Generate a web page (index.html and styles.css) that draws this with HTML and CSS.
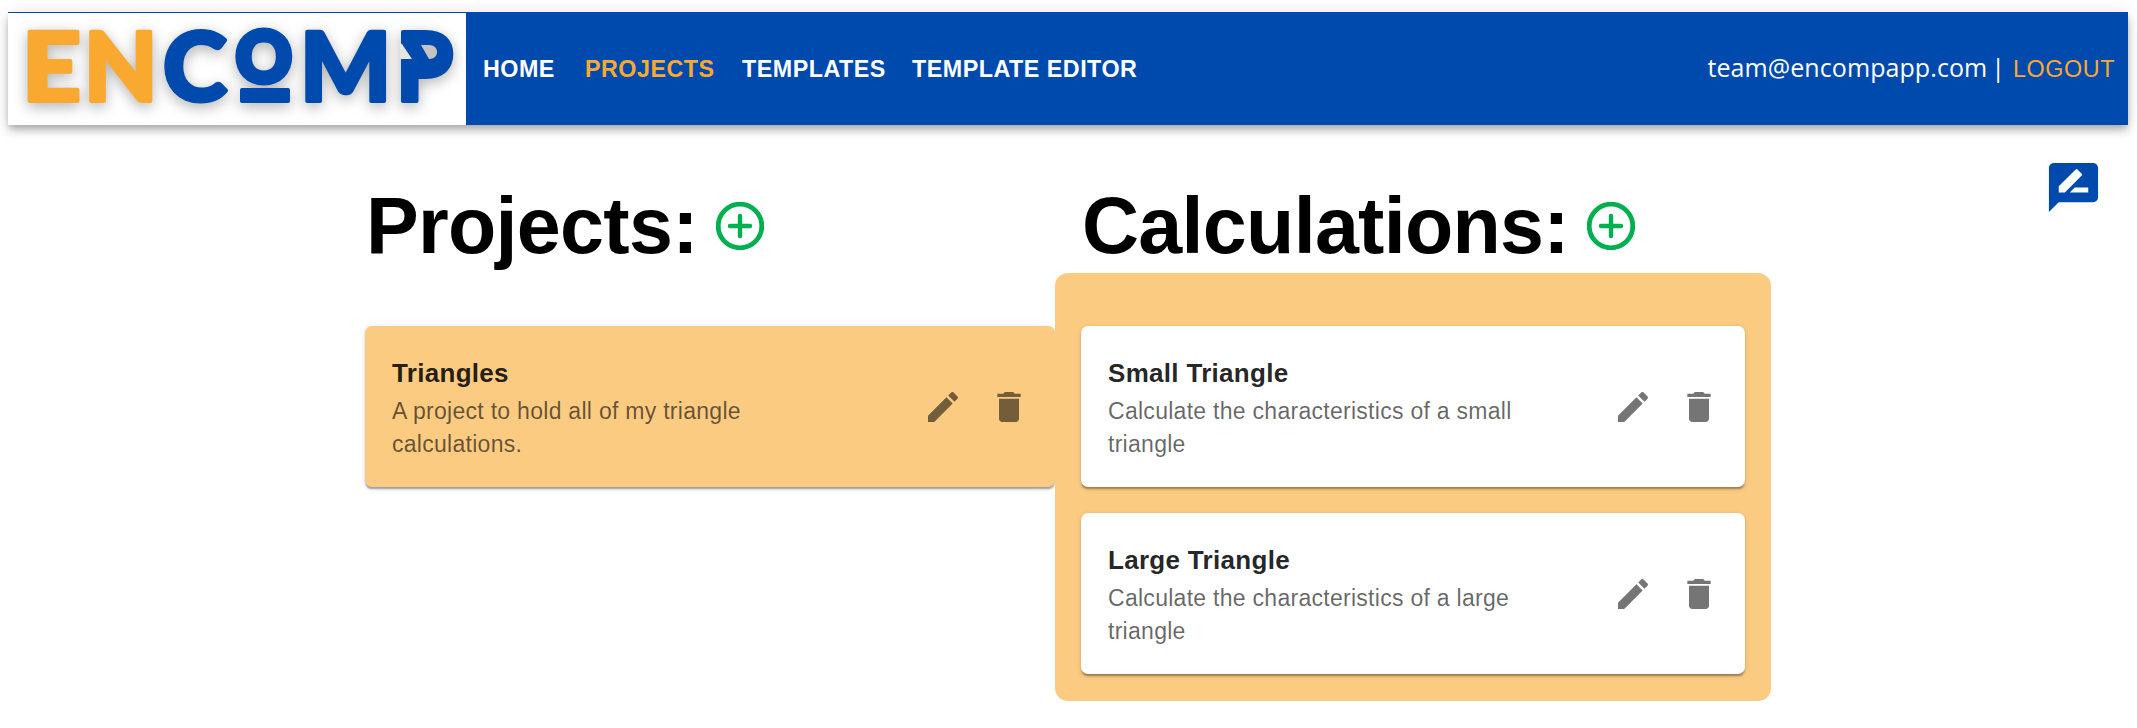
FILE: index.html
```html
<!DOCTYPE html>
<html lang="en">
<head>
<meta charset="utf-8">
<title>Encomp</title>
<link rel="stylesheet" href="styles.css">
</head>
<body>
<svg class="sprite" aria-hidden="true">
  <symbol id="edit" viewBox="0 0 24 24"><path d="M3 17.25V21h3.75L17.81 9.94l-3.75-3.75L3 17.25zM20.71 7.04c.39-.39.39-1.02 0-1.41l-2.34-2.34c-.39-.39-1.02-.39-1.41 0l-1.83 1.83 3.75 3.75 1.83-1.83z"/></symbol>
  <symbol id="trash" viewBox="0 0 24 24"><path d="M6 19c0 1.100.9 2 2 2h8c1.100 0 2-.9 2-2V7H6v12zM19 4h-3.500l-1-1h-5l-1 1H5v2h14V4z"/></symbol>
  <symbol id="add" viewBox="0 0 24 24"><circle cx="12" cy="12" r="10.900" fill="none" stroke="currentColor" stroke-width="2.400"/><path d="M12 7v10M7 12h10" fill="none" stroke="currentColor" stroke-width="2.200" stroke-linecap="round"/></symbol>
</svg>
<header class="navbar">
  <a class="brand">
    <svg class="logo" viewBox="8 13 458 112">
      <g class="logo-shade">
        <g class="logo-gold">
          <text transform="translate(22 101) scale(1.080 1)">E</text>
          <text transform="translate(84 101)">N</text>
        </g>
        <g class="logo-blue">
          <text transform="translate(163 101) scale(1.020 1)">C</text>
          <text class="logo-o" transform="translate(236 82) scale(.980 1)">O</text>
          <rect x="240" y="88" width="50" height="15" rx="2"/>
          <text transform="translate(300 101) scale(1.010 1)">M</text>
          <text transform="translate(396 101) scale(.960 1)">P</text>
        </g>
      </g>
      <path class="logo-cover" d="M410 36h26v30h-26z"/>
      <path class="logo-notch" d="M400 43l2 1 10 15h-12z"/>
      <path class="logo-gap" d="M421 45h8c5 0 8 3 8 7s-3 7-8 7z"/>
    </svg>
  </a>
  <nav class="links">
    <a class="link home">HOME</a>
    <a class="link projects active">PROJECTS</a>
    <a class="link templates">TEMPLATES</a>
    <a class="link editor">TEMPLATE EDITOR</a>
  </nav>
  <div class="account"><span class="email">team@encompapp.com</span><span class="bar">|</span><a class="logout">LOGOUT</a></div>
</header>
<main class="board">
  <section class="column">
    <h1 class="heading"><span>Projects:</span><svg class="add"><use href="#add"/></svg></h1>
    <div class="list">
      <article class="card selected">
        <div class="copy"><h2 class="title">Triangles</h2><p class="text">A project to hold all of my triangle<br>calculations.</p></div>
        <div class="tools"><svg class="icon"><use href="#edit"/></svg><svg class="icon"><use href="#trash"/></svg></div>
      </article>
    </div>
  </section>
  <section class="column calculations">
    <h1 class="heading"><span>Calculations:</span><svg class="add"><use href="#add"/></svg></h1>
    <div class="list panel">
      <article class="card">
        <div class="copy"><h2 class="title">Small Triangle</h2><p class="text">Calculate the characteristics of a small<br>triangle</p></div>
        <div class="tools"><svg class="icon"><use href="#edit"/></svg><svg class="icon"><use href="#trash"/></svg></div>
      </article>
      <article class="card">
        <div class="copy"><h2 class="title">Large Triangle</h2><p class="text">Calculate the characteristics of a large<br>triangle</p></div>
        <div class="tools"><svg class="icon"><use href="#edit"/></svg><svg class="icon"><use href="#trash"/></svg></div>
      </article>
    </div>
  </section>
  <svg class="review" viewBox="0 0 24 24"><path d="M20 2H4c-1.100 0-1.990.9-1.990 2L2 22l4-4h14c1.100 0 2-.9 2-2V4c0-1.100-.9-2-2-2zM6 14v-2.470l6.880-6.880c.2-.2.51-.2.71 0l1.770 1.770c.2.2.2.51 0 .71L8.470 14H6zm12 0h-7.500l2-2H18v2z"/></svg>
</main>
</body>
</html>
```
FILE: styles.css
```css
* { box-sizing: border-box; }
body { margin: 0; padding: 12px 9px 0 8px; min-height: 728px; background: #fff; font-family: "Liberation Sans", Arial, sans-serif; }
h1, h2, p { margin: 0; }
.sprite { display: none; }

.navbar { display: flex; align-items: center; height: 113px; padding-right: 13px; background: #004aad; box-shadow: 0 3.300px 6.600px -1.700px rgba(0,0,0,.2), 0 6.600px 8.300px rgba(0,0,0,.14), 0 1.700px 16.600px rgba(0,0,0,.12); }
.brand { width: 458px; height: 112px; margin-top: 1px; background: #fff; }
.logo { display: block; width: 458px; height: 112px; overflow: visible; }
.logo text { font: 900 95px Lato, "Liberation Sans", sans-serif; stroke-width: 4px; stroke-linejoin: round; }
.logo .logo-o { font-size: 70px; stroke-width: 6px; }
.logo-gold { fill: #faa930; stroke: #faa930; }
.logo-blue { fill: #004aad; stroke: #004aad; }
.logo-blue rect { stroke: none; }
.logo-shade { filter: drop-shadow(0 4px 7px rgba(0,0,0,.3)); }
.logo-cover { fill: #004aad; }
.logo-notch { fill: #e6e6e6; }
.logo-gap { fill: #c4c4c4; }

.links { display: flex; margin-left: 17px; font-size: 23.300px; font-weight: 700; line-height: 28px; color: #fff; white-space: nowrap; }
.link { letter-spacing: .5px; }
.home { width: 102px; }
.projects { width: 157px; }
.templates { width: 170px; }
.active, .logout { color: #faa930; }
.logout { letter-spacing: .6px; }
.account { display: flex; align-items: center; margin-left: auto; color: #fff; font-size: 23.300px; line-height: 28px; white-space: nowrap; }
.email, .bar { padding-bottom: 3px; font-family: "Open Sans", "Noto Sans", sans-serif; font-size: 25px; }
.email { letter-spacing: .08px; }
.bar { margin: 0 8px 0 4px; }

.board { position: relative; display: flex; padding-left: 357px; }
.column { width: 690px; padding-top: 48px; }
.calculations { width: 716px; }
.heading { display: flex; align-items: center; height: 100px; font-size: 79px; line-height: 100px; letter-spacing: -.7px; white-space: nowrap; }
.heading span { padding: 5px 0 0 1px; }
.calculations .heading { padding-left: 26px; }
.add { width: 48px; height: 48px; margin: 6px 0 0 18px; color: #00b050; overflow: visible; }
.list { display: flex; flex-direction: column; gap: 26px; padding-top: 53px; }
.panel { padding: 53px 26px 27px; background: #fccb82; border-radius: 13px; }
.card { display: flex; align-items: center; justify-content: space-between; height: 161px; padding: 0 27px; border-radius: 7px; background: #fff; box-shadow: 0 3.300px 1.700px -1.700px rgba(0,0,0,.2), 0 1.700px 1.700px rgba(0,0,0,.14), 0 1.700px 5px rgba(0,0,0,.12); }
.selected { background: #fccb82; }
.title { font-size: 26px; line-height: 41px; letter-spacing: .3px; color: rgba(0,0,0,.87); white-space: nowrap; }
.text { padding-top: 1px; font-size: 23px; line-height: 33px; letter-spacing: .28px; color: rgba(0,0,0,.6); white-space: nowrap; }
.tools { display: flex; gap: 26px; margin-right: -1px; }
.icon { width: 40px; height: 40px; fill: rgba(0,0,0,.54); }
.review { position: absolute; top: 33px; right: 25px; width: 59px; height: 59px; fill: #004aad; }
```
